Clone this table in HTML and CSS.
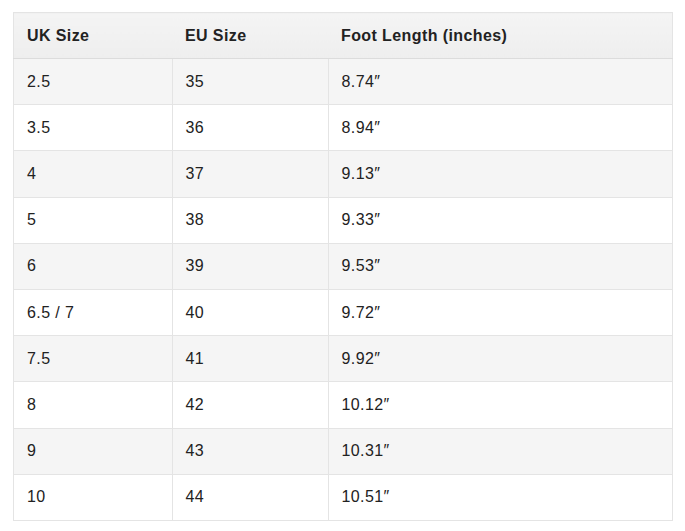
FILE: index.html
```html
<!DOCTYPE html>
<html lang="en">
<head>
<meta charset="utf-8">
<title>Size Chart</title>
<link rel="stylesheet" href="styles.css">
</head>
<body>
<div class="wrap">
<table class="sizes">
<thead>
<tr><th class="c1">UK Size</th><th class="c2">EU Size</th><th class="c3">Foot Length (inches)</th></tr>
</thead>
<tbody>
<tr><td>2.5</td><td>35</td><td>8.74″</td></tr>
<tr><td>3.5</td><td>36</td><td>8.94″</td></tr>
<tr><td>4</td><td>37</td><td>9.13″</td></tr>
<tr><td>5</td><td>38</td><td>9.33″</td></tr>
<tr><td>6</td><td>39</td><td>9.53″</td></tr>
<tr><td>6.5 / 7</td><td>40</td><td>9.72″</td></tr>
<tr><td>7.5</td><td>41</td><td>9.92″</td></tr>
<tr><td>8</td><td>42</td><td>10.12″</td></tr>
<tr><td>9</td><td>43</td><td>10.31″</td></tr>
<tr><td>10</td><td>44</td><td>10.51″</td></tr>
</tbody>
</table>
</div>
</body>
</html>
```
FILE: styles.css
```css
html, body {
  margin: 0;
  padding: 0;
  background: #fff;
}
.wrap {
  padding: 12px 13px 0 13px;
}
.sizes {
  width: 660px;
  border-collapse: collapse;
  font-family: "Liberation Sans", Arial, sans-serif;
  color: #222;
  font-size: 16px;
  letter-spacing: 0.4px;
  border: 1px solid #e4e4e4;
}
.sizes th {
  text-align: left;
  font-weight: bold;
  height: 45px;
  padding: 0 0 0 13px;
  background: linear-gradient(#f4f4f4, #eeeeee);
  border-bottom: 1px solid #dcdcdc;
}
.sizes .c1 { width: 145px; }
.sizes .c2 { width: 143px; }
.sizes td {
  height: 45.2px;
  padding: 0 0 0 13px;
  border: 1px solid #e4e4e4;
}
.sizes tbody tr:nth-child(odd) td {
  background: #f5f5f5;
}
```
